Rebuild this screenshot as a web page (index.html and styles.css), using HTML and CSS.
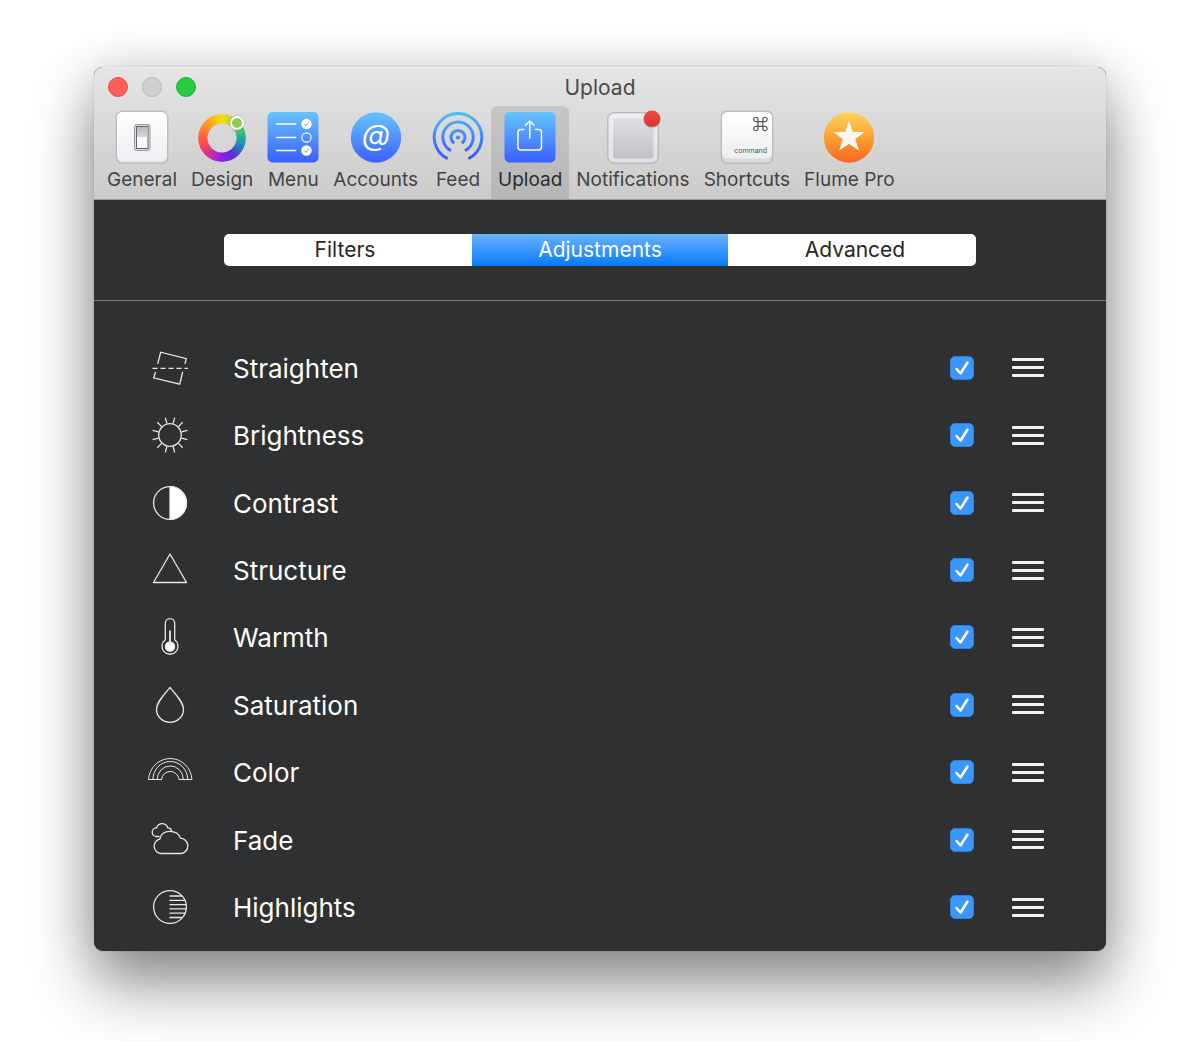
FILE: index.html
```html
<!DOCTYPE html>
<html lang="en">
<head>
<meta charset="utf-8">
<meta name="viewport" content="width=device-width, initial-scale=1">
<title>Upload</title>
<link rel="stylesheet" href="styles.css">
</head>
<body>
<svg class="defs" width="0" height="0" aria-hidden="true">
  <defs>
    <linearGradient id="blue" x1="0" y1="0" x2="0" y2="1"><stop offset="0" stop-color="#67c4ff"/><stop offset="1" stop-color="#3a5fff"/></linearGradient>
    <linearGradient id="feed" gradientUnits="userSpaceOnUse" x1="0" y1="2" x2="0" y2="50"><stop offset="0" stop-color="#4fbcfa"/><stop offset="1" stop-color="#3450ff"/></linearGradient>
    <linearGradient id="orange" x1="0" y1="0" x2="0" y2="1"><stop offset="0" stop-color="#fbd55b"/><stop offset="0.5" stop-color="#fba133"/><stop offset="1" stop-color="#fb661d"/></linearGradient>
    <linearGradient id="key" x1="0" y1="0" x2="0" y2="1"><stop offset="0" stop-color="#ffffff"/><stop offset="1" stop-color="#eceef1"/></linearGradient>
    <linearGradient id="pane" x1="0" y1="0" x2="0" y2="1"><stop offset="0" stop-color="#dfe0e3"/><stop offset="1" stop-color="#c0c2c7"/></linearGradient>
    <linearGradient id="frame" x1="0" y1="0" x2="0" y2="1"><stop offset="0" stop-color="#f0f0f1"/><stop offset="1" stop-color="#dee1e9"/></linearGradient>
    <linearGradient id="switch" x1="0" y1="0" x2="0" y2="1"><stop offset="0" stop-color="#b9babd"/><stop offset="1" stop-color="#d5d6d8"/></linearGradient>
    <linearGradient id="dot" x1="0" y1="0" x2="0" y2="1"><stop offset="0" stop-color="#f04b42"/><stop offset="1" stop-color="#d9352f"/></linearGradient>
  </defs>
</svg>
<main class="window">
  <header class="header">
    <div class="titlebar">
      <div class="lights">
        <button class="light light-close" aria-label="Close"></button>
        <button class="light light-min" aria-label="Minimize"></button>
        <button class="light light-zoom" aria-label="Zoom"></button>
      </div>
      <h1 class="title">Upload</h1>
    </div>
    <nav class="toolbar" aria-label="Preferences">
      <button class="tool">
        <svg class="tool-icon" viewBox="0 0 52 52" aria-hidden="true"><rect x="-0.5" y="-0.5" width="53" height="53.5" rx="7" fill="#bcbdbe"/><rect x="1" y="1" width="50" height="50.5" rx="5.5" fill="#dfe0e2"/><rect x="1" y="1" width="50" height="49" rx="5.5" fill="url(#key)"/><rect x="18.5" y="13.5" width="15.5" height="26" rx="2" fill="#d9dadb" stroke="#9b9c9e"/><rect x="20.5" y="15.5" width="11.5" height="22" fill="#f7f7f8" stroke="#626366"/><rect x="21" y="16" width="10.500" height="10" fill="url(#switch)"/></svg>
        <span>General</span>
      </button>
      <button class="tool">
        <span class="tool-icon wheel"><i class="ring"></i><i class="knob"></i></span>
        <span>Design</span>
      </button>
      <button class="tool">
        <svg class="tool-icon" viewBox="0 0 52 52" aria-hidden="true"><rect x="0.5" y="1" width="51" height="50.5" rx="5" fill="url(#blue)"/><g fill="none" stroke="#fff" stroke-width="1.6" stroke-linecap="round"><path d="M9.500 13H28.500M9.500 26.500H28.500M9.500 39.500H28.500"/><circle cx="39.500" cy="26.500" r="4.600" stroke-width="1.100"/></g><circle cx="39.500" cy="13" r="5.200" fill="#fff"/><circle cx="39.500" cy="39.500" r="5.200" fill="#fff"/><path d="M37.300 13.300l1.600 1.600 3-3.600M37.300 39.800l1.600 1.600 3-3.600" fill="none" stroke="#6aabff" stroke-width="1"/></svg>
        <span>Menu</span>
      </button>
      <button class="tool">
        <svg class="tool-icon" viewBox="0 0 52 52" aria-hidden="true"><circle cx="26" cy="26.500" r="25.200" fill="url(#blue)"/><text class="at" x="26" y="34" text-anchor="middle">@</text></svg>
        <span>Accounts</span>
      </button>
      <button class="tool">
        <svg class="tool-icon" viewBox="0 0 52 52" aria-hidden="true"><g fill="none" stroke="url(#feed)" stroke-width="3"><path d="M15.600 47.700A23.800 23.800 0 1 1 36.400 47.700"/><path d="M19 39.700A15.200 15.200 0 1 1 33 39.700"/><path d="M22.200 32.300A7 7 0 1 1 29.800 32.300"/></g><circle cx="26" cy="26.500" r="2" fill="#4683fb"/></svg>
        <span>Feed</span>
      </button>
      <button class="tool tool-active" aria-current="page">
        <svg class="tool-icon" viewBox="0 0 52 52" aria-hidden="true"><rect x="0.5" y="1" width="51" height="50.5" rx="5" fill="url(#blue)"/><path d="M20.500 18.500H17a3 3 0 0 0-3 3V36a3 3 0 0 0 3 3H34.500a3 3 0 0 0 3-3V21.500a3 3 0 0 0-3-3H31M25.800 27.500V10M21 14.800L25.800 10L30.600 14.800" fill="none" stroke="#fff" stroke-width="1.500"/></svg>
        <span>Upload</span>
      </button>
      <button class="tool">
        <svg class="tool-icon" viewBox="0 0 52 52" aria-hidden="true"><rect x="0" y="1" width="52" height="52" rx="7.500" fill="#bbbcbd"/><rect x="1.500" y="2.500" width="49" height="49" rx="6" fill="url(#frame)"/><rect x="6" y="7" width="40.500" height="40.500" rx="2.500" fill="url(#pane)"/><circle cx="45" cy="8.500" r="9" fill="#000" opacity=".12"/><circle cx="45" cy="7.800" r="8.300" fill="url(#dot)"/></svg>
        <span>Notifications</span>
      </button>
      <button class="tool">
        <svg class="tool-icon" viewBox="0 0 52 52" aria-hidden="true"><rect x="-0.5" y="-0.5" width="53" height="53.500" rx="7" fill="#bcbdbe"/><rect x="1" y="1" width="50" height="50.500" rx="5.500" fill="#d8dadd"/><rect x="1" y="1" width="50" height="46.500" rx="5.500" fill="url(#key)"/><path d="M37 10.600V15.400M41.800 10.600V15.400M37 10.600H41.800M37 15.400H41.800M37 10.600H35.200A2.200 2.200 0 1 1 37 8.800ZM41.800 10.600V8.800A2.200 2.200 0 1 1 43.600 10.600ZM37 15.400V17.200A2.200 2.200 0 1 1 35.200 15.400ZM41.800 15.400H43.600A2.200 2.200 0 1 1 41.800 17.200Z" fill="none" stroke="#555" stroke-width="1.200"/><text class="keycap" x="46" y="42" text-anchor="end">command</text></svg>
        <span>Shortcuts</span>
      </button>
      <button class="tool">
        <svg class="tool-icon" viewBox="0 0 52 52" aria-hidden="true"><circle cx="26" cy="26.500" r="25.200" fill="url(#orange)"/><path d="M26 10.300L29.900 21.600L42 21.800L32.400 29L35.900 40.500L26 33.700L16.100 40.500L19.600 29L10 21.800L22.100 21.600Z" fill="#b84a00" opacity=".3"/><path d="M26 9.500L29.900 20.800L42 21L32.400 28.300L35.900 39.800L26 33L16.100 39.800L19.600 28.300L10 21L22.100 20.800Z" fill="#fdf5ee"/></svg>
        <span>Flume Pro</span>
      </button>
    </nav>
  </header>
  <div class="tabbar">
    <div class="segments" role="tablist">
      <button class="segment" role="tab" aria-selected="false">Filters</button>
      <button class="segment segment-active" role="tab" aria-selected="true">Adjustments</button>
      <button class="segment" role="tab" aria-selected="false">Advanced</button>
    </div>
  </div>
  <ul class="list">
    <li class="row">
      <svg class="row-icon" viewBox="0 0 44 40" aria-hidden="true"><path d="M9.700 15.800L12.700 4.200L38.300 10.600L37 15.800M7.600 24L5.600 29.800L31.700 36.200L34.700 24"/><path d="M4.500 20.300H40" stroke-dasharray="5 3"/></svg>
      <label class="name" for="straighten">Straighten</label>
      <input class="check" type="checkbox" id="straighten" checked>
      <button class="handle" aria-label="Reorder Straighten"><i></i><i></i><i></i></button>
    </li>
    <li class="row">
      <svg class="row-icon" viewBox="0 0 44 40" aria-hidden="true"><circle cx="22" cy="20" r="11.300"/><path d="M33.500 23.100L39.400 24.700M30.400 28.400L34.700 32.700M25.100 31.500L26.700 37.400M18.900 31.500L17.300 37.400M13.600 28.400L9.300 32.700M10.500 23.100L4.600 24.700M10.500 16.900L4.600 15.300M13.600 11.600L9.300 7.300M18.900 8.500L17.300 2.600M25.100 8.500L26.700 2.600M30.400 11.600L34.700 7.300M33.500 16.900L39.400 15.300"/></svg>
      <label class="name" for="brightness">Brightness</label>
      <input class="check" type="checkbox" id="brightness" checked>
      <button class="handle" aria-label="Reorder Brightness"><i></i><i></i><i></i></button>
    </li>
    <li class="row">
      <svg class="row-icon" viewBox="0 0 44 40" aria-hidden="true"><circle cx="22" cy="20" r="16.400"/><path d="M22 3.600A16.400 16.400 0 0 1 22 36.400Z" fill="#fff"/></svg>
      <label class="name" for="contrast">Contrast</label>
      <input class="check" type="checkbox" id="contrast" checked>
      <button class="handle" aria-label="Reorder Contrast"><i></i><i></i><i></i></button>
    </li>
    <li class="row">
      <svg class="row-icon" viewBox="0 0 44 40" aria-hidden="true"><path d="M22 4L38.500 32.500H5.500Z" stroke-linejoin="round"/></svg>
      <label class="name" for="structure">Structure</label>
      <input class="check" type="checkbox" id="structure" checked>
      <button class="handle" aria-label="Reorder Structure"><i></i><i></i><i></i></button>
    </li>
    <li class="row">
      <svg class="row-icon" viewBox="0 0 44 40" aria-hidden="true"><path d="M17.300 22.800V6.300a4.700 4.700 0 0 1 9.400 0V22.800a8 8 0 1 1-9.400 0Z"/><circle cx="22" cy="29.500" r="4.600" fill="#fff"/><path d="M22 29V13.500" stroke-width="1.800"/></svg>
      <label class="name" for="warmth">Warmth</label>
      <input class="check" type="checkbox" id="warmth" checked>
      <button class="handle" aria-label="Reorder Warmth"><i></i><i></i><i></i></button>
    </li>
    <li class="row">
      <svg class="row-icon" viewBox="0 0 44 40" aria-hidden="true"><path d="M22 2.500C28 9.500 35.500 17.500 35.500 24.500A13.500 12.800 0 0 1 8.500 24.500C8.500 17.500 16 9.500 22 2.500Z"/></svg>
      <label class="name" for="saturation">Saturation</label>
      <input class="check" type="checkbox" id="saturation" checked>
      <button class="handle" aria-label="Reorder Saturation"><i></i><i></i><i></i></button>
    </li>
    <li class="row">
      <svg class="row-icon" viewBox="0 0 44 40" aria-hidden="true"><path d="M0.500 27.500A21.800 22.500 0 0 1 44 27.500H31A8.800 9 0 0 0 13.500 27.500ZM4.900 27.500A17.400 18 0 0 1 39.700 27.500M9.200 27.500A13 13.500 0 0 1 35.300 27.500" stroke-width="1"/></svg>
      <label class="name" for="color">Color</label>
      <input class="check" type="checkbox" id="color" checked>
      <button class="handle" aria-label="Reorder Color"><i></i><i></i><i></i></button>
    </li>
    <li class="row">
      <svg class="row-icon" viewBox="0 0 44 40" aria-hidden="true"><path d="M13 33.500a7.300 7.300 0 0 1-1.200-14.400C12.300 14 17 11.300 21.800 11.300c5 0 9.200 2.500 10.700 6.900a7.700 7.700 0 0 1 .8 15.300Z"/><path d="M11.500 16.500H8.500a4.300 4.300 0 0 1 0-8.600C9.500 5.200 11.500 3.700 14 3.700c3 0 5 1.700 5.800 4.100C22 7.900 23.300 9.200 23.700 11.300"/></svg>
      <label class="name" for="fade">Fade</label>
      <input class="check" type="checkbox" id="fade" checked>
      <button class="handle" aria-label="Reorder Fade"><i></i><i></i><i></i></button>
    </li>
    <li class="row">
      <svg class="row-icon" viewBox="0 0 44 40" aria-hidden="true"><circle cx="22" cy="20" r="16.400"/><path d="M21.500 9H34M21.500 13.300H37M21.500 17.600H38M21.500 21.900H38M21.500 26.200H37M21.500 30.500H34"/></svg>
      <label class="name" for="highlights">Highlights</label>
      <input class="check" type="checkbox" id="highlights" checked>
      <button class="handle" aria-label="Reorder Highlights"><i></i><i></i><i></i></button>
    </li>
  </ul>
</main>
</body>
</html>
```
FILE: styles.css
```css
* { box-sizing: border-box; }

body {
  margin: 0;
  padding: 67px 94px 91px;
  background: #fff;
  font-family: Inter, Roboto, "Liberation Sans", sans-serif;
}

.defs { position: absolute; }

button {
  margin: 0;
  padding: 0;
  border: 0;
  background: none;
  font: inherit;
  color: inherit;
}

.window {
  display: flex;
  flex-direction: column;
  min-height: calc(100vh - 158px);
  border-radius: 9px;
  overflow: hidden;
  background: #2f3032;
  box-shadow: 0 0 1px rgba(0, 0, 0, .5), 0 34px 64px rgba(0, 0, 0, .44), 0 0 48px rgba(0, 0, 0, .14);
}

.header {
  border-top: 1px solid #f2f2f2;
  border-bottom: 1px solid #9a9b9a;
  background: linear-gradient(#e5e5e5, #cbcbcb);
}

.titlebar {
  display: grid;
  grid-template-columns: 1fr auto 1fr;
  align-items: center;
  height: 38px;
  padding: 0 14px;
}

.lights { display: flex; gap: 14px; }

.light {
  width: 20px;
  height: 20px;
  border: 1px solid;
  border-radius: 50%;
}
.light-close { background: #fe5f57; border-color: #e64f49; }
.light-min { background: #d0d0d0; border-color: #b9b9b9; }
.light-zoom { background: #28cb41; border-color: #20b237; }

.title {
  margin: 0;
  padding-top: 2px;
  font-size: 21px;
  line-height: 32px;
  font-weight: 400;
  color: #4a4a4a;
}

.toolbar { display: flex; padding-left: 6px; }

.tool {
  display: flex;
  flex-direction: column;
  align-items: center;
  gap: 4px;
  height: 93px;
  min-width: 66px;
  padding: 5px 7px 0;
  font-size: 19px;
  line-height: 26px;
  white-space: nowrap;
  color: #444;
}
.tool-active { background: linear-gradient(#c6c6c6, #b6b6b6); border-radius: 6px 6px 0 0; color: #2b2b2b; }

.tool-icon { display: block; width: 52px; height: 52px; overflow: visible; }

.wheel { position: relative; padding: 3px 2px; }
.ring {
  display: block;
  width: 48px;
  height: 48px;
  border-radius: 50%;
  background: conic-gradient(#f6e000, #9ccc3c 45deg, #22b58c 85deg, #2a7fc0 115deg, #5a2fd0 150deg, #8a1cf5 180deg, #c92fa0 215deg, #fb4a55 250deg, #ff6a3a 280deg, #ffa41c 320deg, #f6e000);
  -webkit-mask: radial-gradient(circle, transparent 14px, #000 15px);
  mask: radial-gradient(circle, transparent 14px, #000 15px);
}
.knob {
  position: absolute;
  left: 34px;
  top: 5px;
  width: 14px;
  height: 14px;
  border: 2px solid #fff;
  border-radius: 50%;
  background: #93c95b;
  box-shadow: 0 0 2px rgba(0, 0, 0, .3);
}

.at { font: italic 400 29px Inter, sans-serif; fill: #fff; }
.keycap { font: 400 7px Inter, sans-serif; fill: #555; }

.tabbar {
  padding: 34px 24px;
  border-bottom: 1px solid #737476;
}

.segments {
  display: grid;
  grid-template-columns: 31fr 32fr 31fr;
  max-width: 752px;
  margin: 0 auto;
}

.segment {
  height: 32px;
  background: #fff;
  font-size: 21px;
  line-height: 32px;
  color: #262626;
}
.segment:first-child { padding-right: 6px; border-radius: 5px 0 0 5px; }
.segment:last-child { padding-left: 6px; border-radius: 0 5px 5px 0; }
.segment-active { background: linear-gradient(#6cb3fa, #067aff); color: #fff; }

.list {
  flex: 1;
  display: grid;
  grid-auto-rows: minmax(56px, 1fr);
  margin: 0;
  padding: 33px 62px 10px 54px;
  list-style: none;
}

.row { display: flex; align-items: center; }

.row-icon {
  width: 44px;
  height: 40px;
  fill: none;
  stroke: #e8e8e8;
  stroke-width: 1.3;
  overflow: visible;
}

.name {
  flex: 1;
  margin-left: 41px;
  padding-top: 2px;
  font-size: 26px;
  line-height: 32px;
  color: #fff;
}

.check {
  appearance: none;
  width: 24px;
  height: 24px;
  margin: 0 38px 0 0;
  border: 1px solid #2f80dc;
  border-radius: 5px;
  background: #3b97fd url("data:image/svg+xml,%3Csvg xmlns='http://www.w3.org/2000/svg' viewBox='0 0 22 22'%3E%3Cpath d='M5.500 12L9.500 16.500L16.500 5.500' fill='none' stroke='white' stroke-width='2.500' stroke-linecap='round' stroke-linejoin='round'/%3E%3C/svg%3E") center / 22px 22px no-repeat;
}

.handle {
  display: flex;
  flex-direction: column;
  gap: 5px;
  width: 32px;
}
.handle i { height: 3px; border-radius: 1px; background: #f2f2f2; }
```
